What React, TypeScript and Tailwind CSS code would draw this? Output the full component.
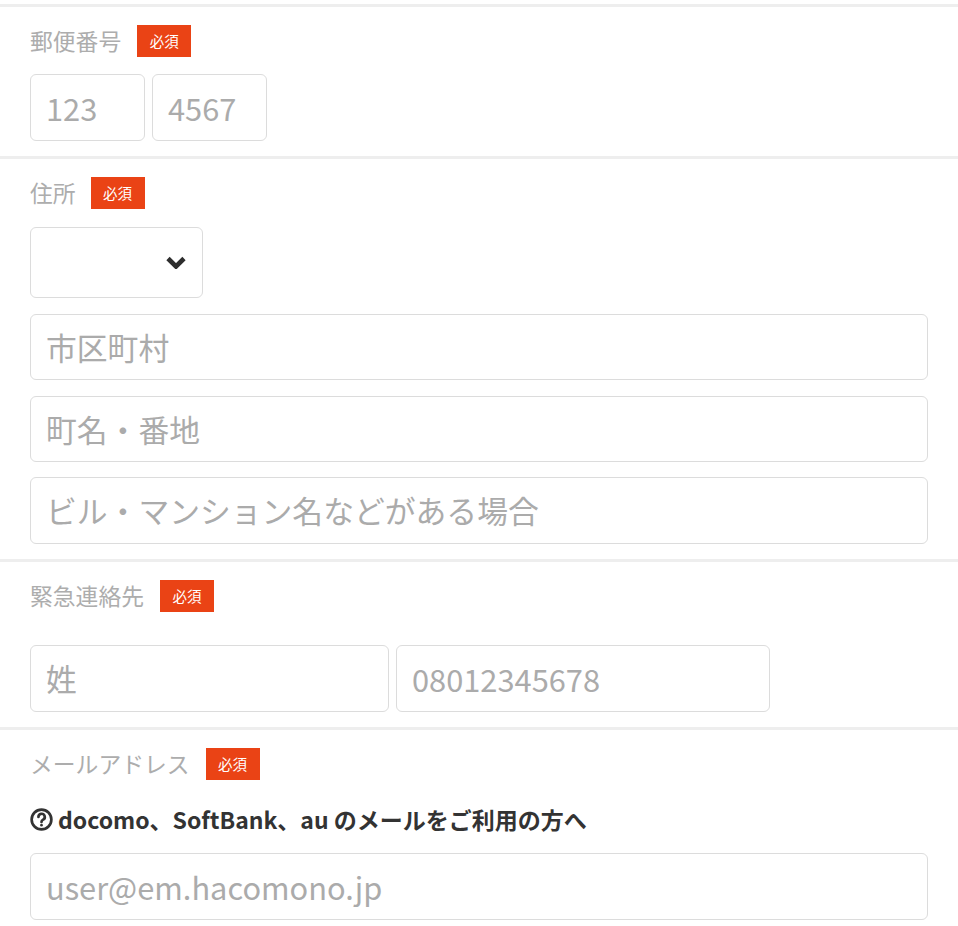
const F = "font-['Noto_Sans_CJK_JP','Noto_Sans',sans-serif]";
function Label({ text, gap = "gap-4" }: { text: string; gap?: string }) {
  return (
    <div className={`flex items-center h-8 ${gap}`}>
      <span className="text-[22.8px] leading-8 text-[#adadad]">{text}</span>
      <span className="w-[54px] h-8 bg-[#ea4315] text-white text-[14.5px] leading-8 text-center">必須</span>
    </div>
  );
}
function Input({ ph, cls }: { ph: string; cls: string }) {
  return (
    <div className={`border border-[#dcdcdc] rounded-md bg-white flex items-center pl-[15px] text-[30.8px] text-[#ababab] whitespace-nowrap ${cls}`}>{ph}</div>
  );
}
export default function App() {
  return (
    <div className={`w-[958px] h-[926px] overflow-hidden bg-white ${F}`}>
      <div className="border-t-[3px] border-[#eeeeee] mt-1 h-[152px] px-[30px] pt-[18px]">
        <Label text="郵便番号" />
        <div className="flex gap-[7px] mt-[17px]">
          <Input ph="123" cls="w-[115px] h-[67px] pt-0.5" />
          <Input ph="4567" cls="w-[115px] h-[67px] pt-0.5" />
        </div>
      </div>
      <div className="border-t-[3px] border-[#eeeeee] h-[403px] px-[30px] pt-[18px]">
        <Label text="住所" gap="gap-[15px]" />
        <div className="mt-[18px] w-[173px] h-[71px] border border-[#dcdcdc] rounded-md flex items-center justify-end pr-4">
          <svg width="20" height="13" viewBox="0 0 20 13" fill="none" stroke="#2e2e2e" strokeWidth="4.6" strokeLinejoin="miter"><path d="M2 2.5l8 8 8-8" /></svg>
        </div>
        <div className="flex flex-col mt-4">
          <Input ph="市区町村" cls="w-[898px] h-[66px]" />
          <Input ph="町名・番地" cls="w-[898px] h-[66px] mt-4" />
          <Input ph="ビル・マンション名などがある場合" cls="w-[898px] h-[67px] mt-[15px]" />
        </div>
      </div>
      <div className="border-t-[3px] border-[#eeeeee] h-[168px] px-[30px] pt-[18px]">
        <Label text="緊急連絡先" />
        <div className="flex gap-[7px] mt-[33px]">
          <Input ph="姓" cls="w-[359px] h-[67px]" />
          <Input ph="08012345678" cls="w-[374px] h-[67px] pt-0.5" />
        </div>
      </div>
      <div className="border-t-[3px] border-[#eeeeee] px-[30px] pt-[18px]">
        <Label text="メールアドレス" />
        <div className="flex items-center gap-[5px] mt-[23px] h-8 text-[23px] font-bold text-[#333]">
          <svg width="23" height="23" viewBox="0 0 24 24" fill="none" stroke="#333" strokeWidth="2.8" strokeLinecap="round"><circle cx="12" cy="12" r="10.3" /><path d="M8.8 9.3a3.3 3.3 0 1 1 4.9 2.9c-1.1.6-1.7 1.2-1.7 2.3" /><path d="M12 17.8v.1" /></svg>
          <span>docomo、SoftBank、au のメールをご利用の方へ</span>
        </div>
        <Input ph="user@em.hacomono.jp" cls="w-[898px] h-[67px] mt-[18px] pt-0.5" />
      </div>
    </div>
  );
}
